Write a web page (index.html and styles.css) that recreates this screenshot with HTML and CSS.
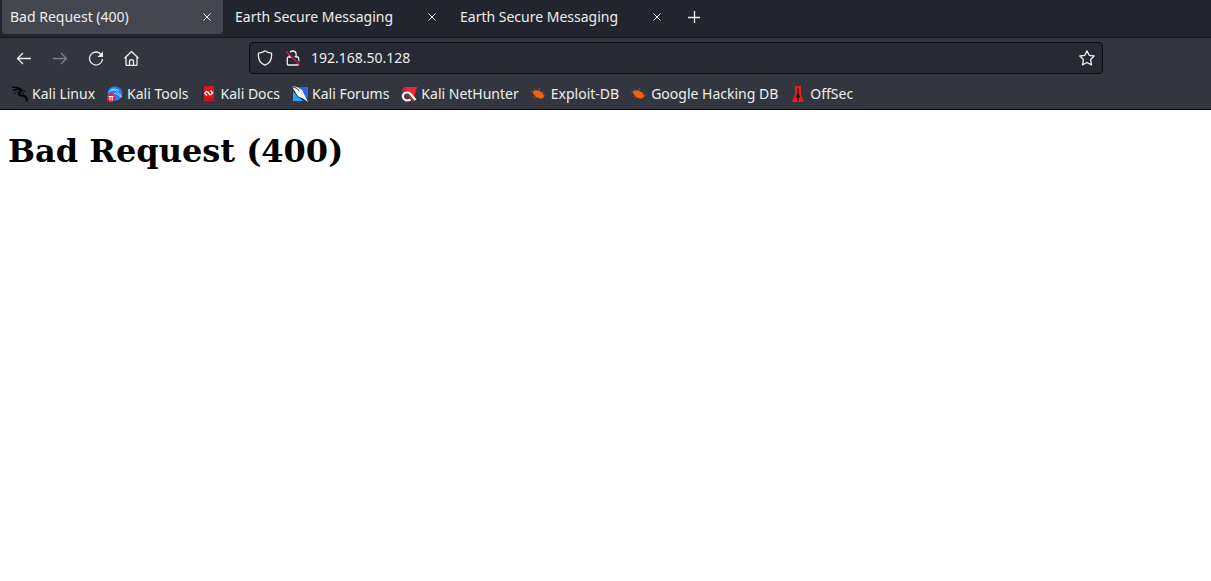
FILE: index.html
```html
<!DOCTYPE html>
<html lang="en">
<head>
<meta charset="utf-8">
<title>Bad Request (400)</title>
<link rel="stylesheet" href="styles.css">
</head>
<body>
<header class="chrome">
  <div class="tabs">
    <div class="tab tab-active">
      <button class="tab-title" type="button">Bad Request (400)</button>
      <button class="tab-close" type="button" aria-label="Close tab"><svg width="10" height="10" viewBox="0 0 10 10"><path d="M1.500 1.500l7 7M8.500 1.500l-7 7"/></svg></button>
    </div>
    <div class="tab">
      <button class="tab-title" type="button">Earth Secure Messaging</button>
      <button class="tab-close" type="button" aria-label="Close tab"><svg width="10" height="10" viewBox="0 0 10 10"><path d="M1.500 1.500l7 7M8.500 1.500l-7 7"/></svg></button>
    </div>
    <div class="tab">
      <button class="tab-title" type="button">Earth Secure Messaging</button>
      <button class="tab-close" type="button" aria-label="Close tab"><svg width="10" height="10" viewBox="0 0 10 10"><path d="M1.500 1.500l7 7M8.500 1.500l-7 7"/></svg></button>
    </div>
    <button class="new-tab" type="button" aria-label="New tab"><svg width="12" height="12" viewBox="0 0 12 12"><path d="M6.500 0v12M0 6.500h12"/></svg></button>
  </div>

  <div class="toolbar">
    <div class="nav-buttons">
      <button class="nav-button" type="button" aria-label="Back"><svg width="16" height="16" viewBox="0 0 16 16"><path d="M15 8.500H1.500M7 3L1.500 8.500L7 14"/></svg></button>
      <button class="nav-button" type="button" aria-label="Forward" disabled><svg width="16" height="16" viewBox="0 0 16 16"><path d="M1 8.500h13.500M9 3L14.500 8.500L9 14"/></svg></button>
      <button class="nav-button" type="button" aria-label="Reload"><svg width="16" height="16" viewBox="0 0 16 16"><path d="M13.500 5A6.500 6.500 0 1 0 14.500 9"/><path class="solid" d="M15 1.500V7H9.500z"/></svg></button>
      <button class="nav-button" type="button" aria-label="Home"><svg width="16" height="16" viewBox="0 0 16 16"><path d="M.5 8.300L7.500 1.500l7 6.800M2 7v7.500q0 1 1 1h9q1 0 1-1V7M5.500 15.500v-4q0-1.800 2-1.800t2 1.800v4"/></svg></button>
    </div>
    <div class="address-area">
      <div class="address">
        <svg width="16" height="16" viewBox="0 0 16 16" aria-hidden="true"><path d="M8 .8C6 2.300 3.800 2.900 1.500 3.100c-.6 5.400 1 10 6.500 12.100c5.500-2.100 7.100-6.700 6.500-12.100C12.200 2.900 10 2.300 8 .8z"/></svg>
        <svg width="16" height="16" viewBox="0 0 16 16" aria-hidden="true"><path d="M4.500 7V4.300a3.300 3.300 0 0 1 6.600 0V7M3.500 7h9q1.200 0 1.200 1.200v5.600q0 1.200-1.200 1.200h-9q-1.200 0-1.200-1.200V8.200Q2.300 7 3.500 7z"/><path class="cut" d="M2.200.8L16 14.600"/><path class="slash" d="M1 1.200l14 14"/></svg>
        <input class="address-input" type="text" value="192.168.50.128" aria-label="Address">
        <button class="star" type="button" aria-label="Bookmark this page"><svg width="16" height="16" viewBox="0 0 16 16"><path d="M8 .9l2.200 4.400l5 .7l-3.600 3.500l.9 5.400L8 12.500L3.500 14.900l.9-5.400L.8 6l5-.7z"/></svg></button>
      </div>
    </div>
  </div>

  <nav class="bookmarks" aria-label="Bookmarks">
    <a class="bookmark" href="#"><svg width="16" height="16" viewBox="0 0 16 16"><g fill="none" stroke="#050607"><path stroke-width="1.500" d="M0 1l7 1M1 4.500l7-2"/><path stroke-width="2.200" d="M5 2.500c5 0 4 2 2.500 4s0 3 2.500 3c3.500 0 5 2.500 5 6"/><path d="M7 3l7 2.500M9 5l3 3M2 8l3-2M9 9l5 2"/></g></svg>Kali Linux</a>
    <a class="bookmark" href="#"><svg width="16" height="16" viewBox="0 0 16 16"><circle cx="8" cy="7.500" r="7.300" fill="#267cf4"/><path d="M2 5.500C6 3 9 4 10 6s4 1.500 4.500 5M4 3.500c3-1 6 0 8 1.500M7 7.500c2 0 5 1 7 4" fill="none" stroke="#b8d8ff" stroke-width=".9"/><circle cx="4" cy="11.800" r="4.200" fill="#e51f2d"/><path d="M1.500 10.500h5M3 10.500v4M5.200 10.500v4" fill="none" stroke="#fff"/></svg>Kali Tools</a>
    <a class="bookmark" href="#"><svg width="16" height="16" viewBox="0 0 16 16"><path d="M1 0h12v15H1z" fill="#d9161d"/><path d="M1 0h1.500v15H1z" fill="#24213f"/><path d="M2.500 12.500H13v1H2.500z" fill="#a50e19"/><path d="M6 5L3.800 7.300L6 9.500M9.500 4.500l2.200 2.300l-2.200 2.300M6.500 5.500l2.500 3.500" fill="none" stroke="#fff" stroke-width="1.300"/></svg>Kali Docs</a>
    <a class="bookmark" href="#"><svg width="16" height="16" viewBox="0 0 16 16"><path d="M3 1h13v10l-3 4z" fill="#2369ef"/><path d="M1 5l10 10H1z" fill="#21a5ff"/><path d="M0 0l5 1l5 3l2 4l4 8l-5-3l-5-2l-3-5z" fill="#f7f8fa"/><path d="M0 .5l5 2l2 2.500M2 5l4 6l5 2l4 3" fill="none" stroke="#101a28" stroke-width=".9"/></svg>Kali Forums</a>
    <a class="bookmark" href="#"><svg width="16" height="16" viewBox="0 0 16 16"><path d="M3 1h13l-3 11L7 7z" fill="#ed2732"/><path d="M1 3l3-2l2 3L2 7z" fill="#d52131"/><path d="M14.500 14L10 8.500C7 4.500 1 7 2 11s5 4 7.500 2.500" fill="none" stroke="#f7f8fa" stroke-width="2.200"/><path d="M5 10.500q2-2 3.500 0l4 4.500" fill="none" stroke="#e32b34" stroke-width="1.200"/></svg>Kali NetHunter</a>
    <a class="bookmark" href="#"><svg width="16" height="16" viewBox="0 0 16 16"><path d="M1.500 6C4 3 8 4 11 6.500l2.500 3.500l-2 2.500C7 13 3 10 1.500 6z" fill="#ee6310"/><path d="M4 5L3 2.500M8 5l.5-3M11 7l2-1M12 9h3M5 10l-3 .5M6 11l-2 2M9 12v1.500M3 6L0 5" stroke="#a94d22" fill="none" stroke-width=".7"/></svg>Exploit-DB</a>
    <a class="bookmark" href="#"><svg width="16" height="16" viewBox="0 0 16 16"><path d="M1.500 6C4 3 8 4 11 6.500l2.500 3.500l-2 2.500C7 13 3 10 1.500 6z" fill="#ee6310"/><path d="M4 5L3 2.500M8 5l.5-3M11 7l2-1M12 9h3M5 10l-3 .5M6 11l-2 2M9 12v1.500M3 6L0 5" stroke="#a94d22" fill="none" stroke-width=".7"/></svg>Google Hacking DB</a>
    <a class="bookmark" href="#"><svg width="16" height="16" viewBox="0 0 16 16"><path d="M5 0h6v8l3 8H2l3-8z" fill="#df2025"/><path d="M7.500 2h1v5l1.500 3.500l-1.300 2V15H7.300v-2.500l-1.300-2L7.500 7z" fill="#280b10"/></svg>OffSec</a>
  </nav>
</header>
<main class="page">
  <h1 class="heading">Bad Request (400)</h1>
</main>
</body>
</html>
```
FILE: styles.css
```css
body {
  margin: 0;
  background: #fff;
}

.chrome {
  background: #33363e;
  border-bottom: 1px solid #0c0d11;
  color: #eeeeec;
  font: 14px/20px "Noto Sans", sans-serif;
}

button,
input {
  margin: 0;
  padding: 0;
  border: 0;
  background: none;
  color: inherit;
  font: inherit;
}

svg {
  display: block;
  flex: none;
}

.tabs svg,
.toolbar svg {
  fill: none;
  stroke: #eeeeec;
  stroke-width: 1.3;
  stroke-linejoin: round;
}

.tabs {
  display: flex;
  align-items: flex-start;
  gap: 4px;
  height: 37px;
  padding-left: 2px;
  background: #23252e;
  border-bottom: 1px solid #15161b;
}

.tab {
  display: flex;
  align-items: center;
  flex: 0 1 221px;
  height: 34px;
  box-sizing: border-box;
  padding: 0 11px 0 8px;
  border-radius: 0 0 4px 4px;
}

.tab-active {
  background: #44474f;
}

.tab-title {
  flex: 1;
  overflow: hidden;
  text-align: left;
  white-space: nowrap;
}

.tabs .tab-close svg {
  stroke-width: 1;
}

.new-tab {
  display: grid;
  place-items: center;
  width: 34px;
  height: 34px;
}

.toolbar {
  display: flex;
  align-items: center;
  height: 40px;
  padding-left: 6px;
}

.nav-buttons {
  display: flex;
}

.nav-button {
  display: grid;
  place-items: center;
  width: 36px;
  height: 32px;
}

.nav-button:disabled {
  opacity: .4;
}

.toolbar .solid {
  fill: #eeeeec;
  stroke: none;
}

.toolbar .cut {
  stroke: #272934;
  stroke-width: 2;
}

.toolbar .slash {
  stroke: #e21546;
}

.address-area {
  display: grid;
  grid-template-columns: 11fr 95fr 12fr;
  flex: 1;
}

.address {
  display: flex;
  align-items: center;
  grid-column: 2;
  gap: 12px;
  height: 32px;
  box-sizing: border-box;
  padding: 0 7px;
  background: #272934;
  border: 1px solid #0c0d11;
  border-radius: 4px;
}

.address-input {
  flex: 1;
  min-width: 0;
  margin-left: -2px;
}

.bookmarks {
  display: flex;
  align-items: center;
  gap: 12px;
  height: 31px;
  padding-left: 12px;
}

.bookmark {
  display: flex;
  align-items: center;
  gap: 4px;
  color: inherit;
  text-decoration: none;
  white-space: nowrap;
}

.page {
  padding: 0 8px;
}

.heading {
  margin: 22px 0;
  font: bold 32px/38px "DejaVu Serif", serif;
}
```
